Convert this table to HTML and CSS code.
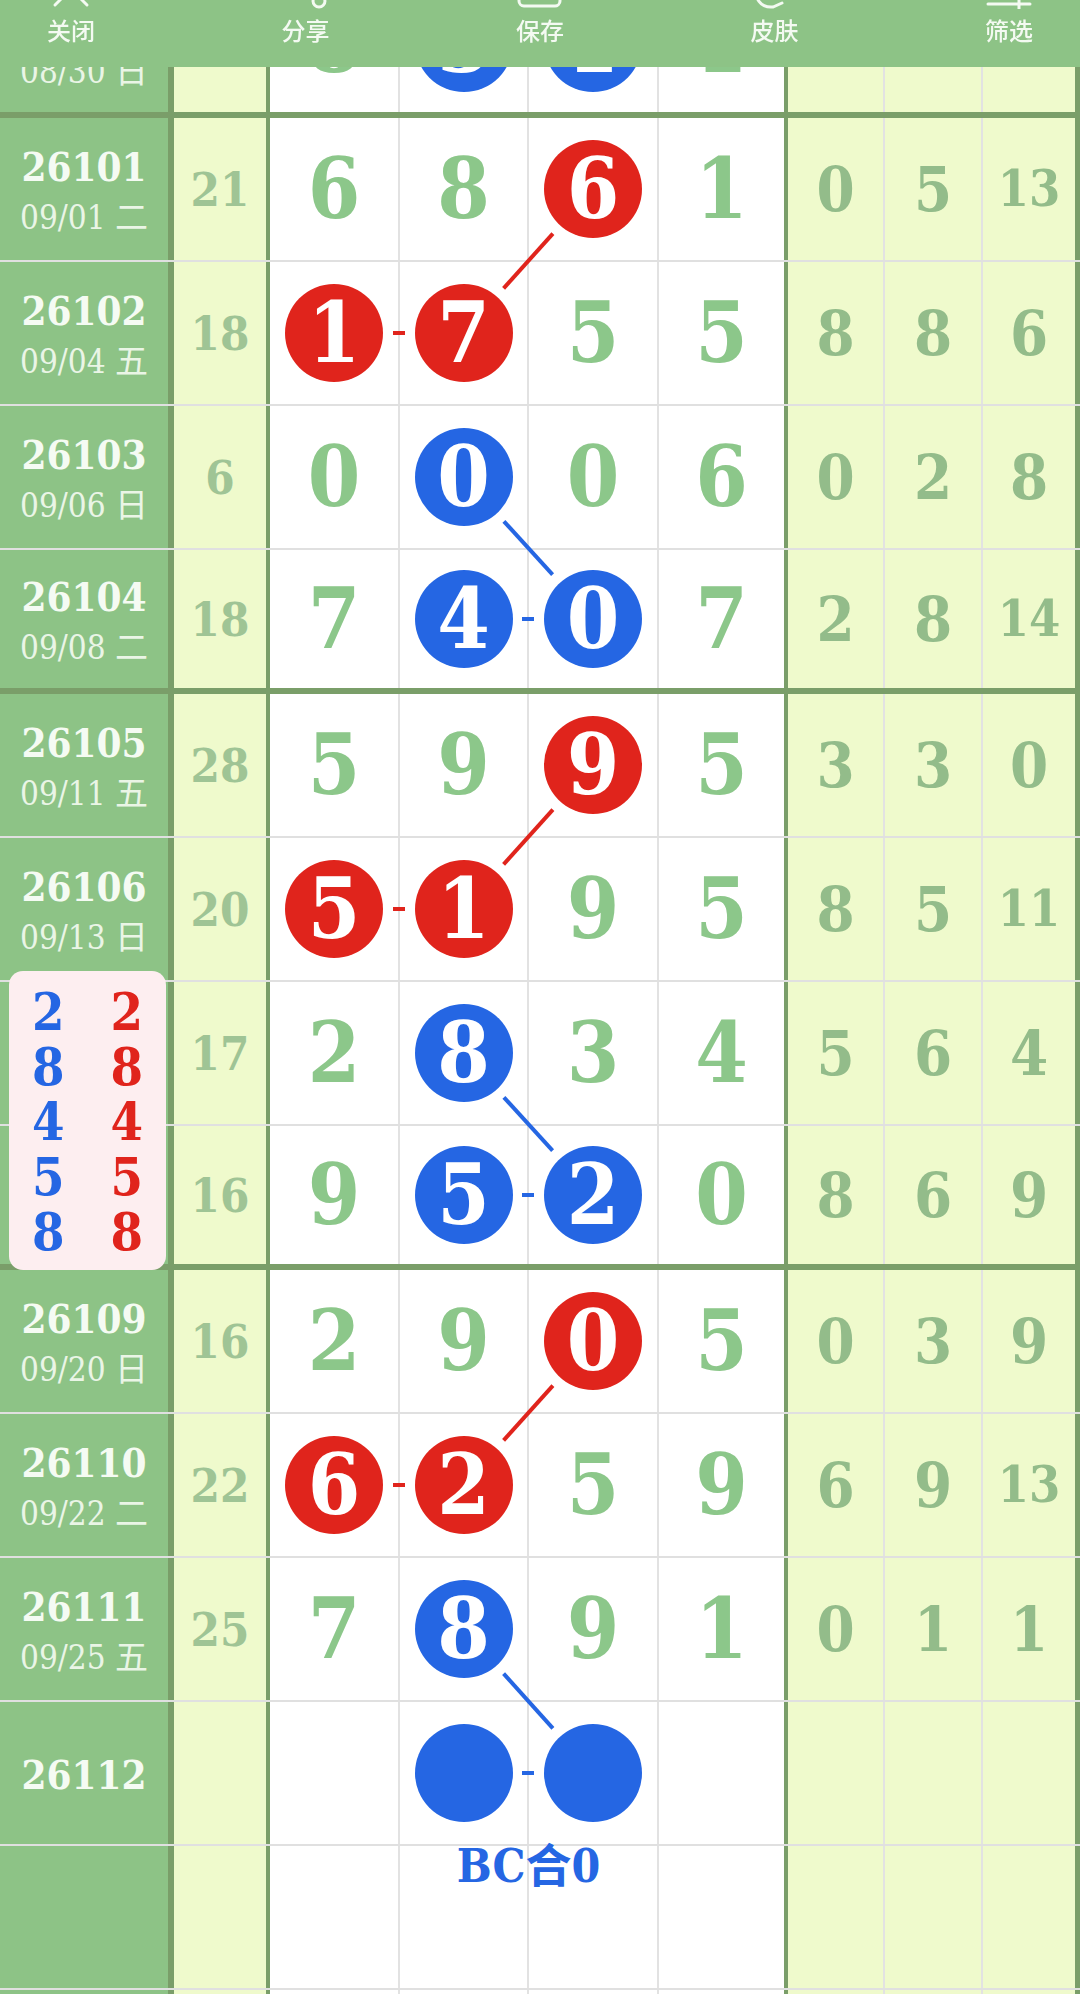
FILE: index.html
```html
<!DOCTYPE html>
<html lang="zh-CN">
<head>
  <meta charset="UTF-8" />
  <title>走势图</title>
  <meta name="viewport" content="width=device-width, initial-scale=1" />
  <link rel="stylesheet" href="styles.css">
</head>
<body>

  <div class="toolbar">
    <div class="tool">
      <svg viewBox="0 0 48 40"><path d="M8 4 L40 36 M40 4 L8 36" /></svg>
      <span>关闭</span>
    </div>
    <div class="tool">
      <svg viewBox="0 0 48 40"><circle cx="37" cy="32" r="6" /><path d="M12 20 L32 29" /></svg>
      <span>分享</span>
    </div>
    <div class="tool">
      <svg viewBox="0 0 48 40"><rect x="3" y="6" width="41" height="31" rx="5" /></svg>
      <span>保存</span>
    </div>
    <div class="tool">
      <svg viewBox="0 0 48 40"><path d="M6 14 C2 30 10 39 22 38 L31 34" /></svg>
      <span>皮肤</span>
    </div>
    <div class="tool">
      <svg viewBox="0 0 48 40"><path d="M3 35 L45 35 M34 24 L34 40" /></svg>
      <span>筛选</span>
    </div>
  </div>

  <div class="sheet">
    <div class="row end">
      <div class="no"><b>26100</b><span>08/30 日</span></div>
      <div class="sum">14</div>
      <div class="d">8</div>
      <div class="d"><i class="ball blue">3</i></div>
      <div class="d"><i class="ball blue">1</i></div>
      <div class="d d4">1</div>
      <div class="r">3</div>
      <div class="r">7</div>
      <div class="r last two">10</div>
    </div>

    <div class="row">
      <div class="no"><b>26101</b><span>09/01 二</span></div>
      <div class="sum">21</div>
      <div class="d">6</div>
      <div class="d">8</div>
      <div class="d"><i class="ball red">6</i></div>
      <div class="d d4">1</div>
      <div class="r">0</div>
      <div class="r">5</div>
      <div class="r last two">13</div>
    </div>
    <div class="row">
      <div class="no"><b>26102</b><span>09/04 五</span></div>
      <div class="sum">18</div>
      <div class="d"><i class="ball red">1</i></div>
      <div class="d"><i class="ball red">7</i></div>
      <div class="d">5</div>
      <div class="d d4">5</div>
      <div class="r">8</div>
      <div class="r">8</div>
      <div class="r last">6</div>
    </div>
    <div class="row">
      <div class="no"><b>26103</b><span>09/06 日</span></div>
      <div class="sum">6</div>
      <div class="d">0</div>
      <div class="d"><i class="ball blue">0</i></div>
      <div class="d">0</div>
      <div class="d d4">6</div>
      <div class="r">0</div>
      <div class="r">2</div>
      <div class="r last">8</div>
    </div>
    <div class="row end">
      <div class="no"><b>26104</b><span>09/08 二</span></div>
      <div class="sum">18</div>
      <div class="d">7</div>
      <div class="d"><i class="ball blue">4</i></div>
      <div class="d"><i class="ball blue">0</i></div>
      <div class="d d4">7</div>
      <div class="r">2</div>
      <div class="r">8</div>
      <div class="r last two">14</div>
    </div>

    <div class="row">
      <div class="no"><b>26105</b><span>09/11 五</span></div>
      <div class="sum">28</div>
      <div class="d">5</div>
      <div class="d">9</div>
      <div class="d"><i class="ball red">9</i></div>
      <div class="d d4">5</div>
      <div class="r">3</div>
      <div class="r">3</div>
      <div class="r last">0</div>
    </div>
    <div class="row">
      <div class="no"><b>26106</b><span>09/13 日</span></div>
      <div class="sum">20</div>
      <div class="d"><i class="ball red">5</i></div>
      <div class="d"><i class="ball red">1</i></div>
      <div class="d">9</div>
      <div class="d d4">5</div>
      <div class="r">8</div>
      <div class="r">5</div>
      <div class="r last two">11</div>
    </div>
    <div class="row">
      <div class="no"><b>26107</b><span>09/15 二</span></div>
      <div class="sum">17</div>
      <div class="d">2</div>
      <div class="d"><i class="ball blue">8</i></div>
      <div class="d">3</div>
      <div class="d d4">4</div>
      <div class="r">5</div>
      <div class="r">6</div>
      <div class="r last">4</div>
    </div>
    <div class="row end">
      <div class="no"><b>26108</b><span>09/18 五</span></div>
      <div class="sum">16</div>
      <div class="d">9</div>
      <div class="d"><i class="ball blue">5</i></div>
      <div class="d"><i class="ball blue">2</i></div>
      <div class="d d4">0</div>
      <div class="r">8</div>
      <div class="r">6</div>
      <div class="r last">9</div>
    </div>

    <div class="row">
      <div class="no"><b>26109</b><span>09/20 日</span></div>
      <div class="sum">16</div>
      <div class="d">2</div>
      <div class="d">9</div>
      <div class="d"><i class="ball red">0</i></div>
      <div class="d d4">5</div>
      <div class="r">0</div>
      <div class="r">3</div>
      <div class="r last">9</div>
    </div>
    <div class="row">
      <div class="no"><b>26110</b><span>09/22 二</span></div>
      <div class="sum">22</div>
      <div class="d"><i class="ball red">6</i></div>
      <div class="d"><i class="ball red">2</i></div>
      <div class="d">5</div>
      <div class="d d4">9</div>
      <div class="r">6</div>
      <div class="r">9</div>
      <div class="r last two">13</div>
    </div>
    <div class="row">
      <div class="no"><b>26111</b><span>09/25 五</span></div>
      <div class="sum">25</div>
      <div class="d">7</div>
      <div class="d"><i class="ball blue">8</i></div>
      <div class="d">9</div>
      <div class="d d4">1</div>
      <div class="r">0</div>
      <div class="r">1</div>
      <div class="r last">1</div>
    </div>
    <div class="row">
      <div class="no"><b>26112</b></div>
      <div class="sum"></div>
      <div class="d"></div>
      <div class="d"><i class="ball blue"></i></div>
      <div class="d"><i class="ball blue"></i></div>
      <div class="d d4"></div>
      <div class="r"></div>
      <div class="r"></div>
      <div class="r last"></div>
    </div>
    <div class="row">
      <div class="no"></div>
      <div class="sum"></div>
      <div class="d"></div>
      <div class="d"></div>
      <div class="d"></div>
      <div class="d d4"></div>
      <div class="r"></div>
      <div class="r"></div>
      <div class="r last"></div>
      <div class="tag">BC合0</div>
    </div>
    <div class="row">
      <div class="no"></div>
      <div class="sum"></div>
      <div class="d"></div>
      <div class="d"></div>
      <div class="d"></div>
      <div class="d d4"></div>
      <div class="r"></div>
      <div class="r"></div>
      <div class="r last"></div>
    </div>
  </div>

  <!-- links between the paired balls -->
  <svg class="links" viewBox="0 0 1080 1994">
    <g class="red">
      <line x1="552.9" y1="233.6" x2="503.6" y2="288.4" />
      <line x1="552.9" y1="809.6" x2="503.6" y2="864.4" />
      <line x1="552.9" y1="1385.6" x2="503.6" y2="1440.4" />
      <rect x="393" y="331" width="12" height="4" />
      <rect x="393" y="907" width="12" height="4" />
      <rect x="393" y="1483" width="12" height="4" />
    </g>
    <g class="blue">
      <line x1="503.9" y1="521.3" x2="552.6" y2="574.7" />
      <line x1="503.9" y1="1097.3" x2="552.6" y2="1150.7" />
      <line x1="503.6" y1="1673.6" x2="552.9" y2="1728.4" />
      <rect x="522" y="617" width="12" height="4" />
      <rect x="522" y="1193" width="12" height="4" />
      <rect x="522" y="1771" width="12" height="4" />
    </g>
  </svg>

  <div class="pick">
    <div class="blue-col">
      <span>2</span><span>8</span><span>4</span><span>5</span><span>8</span>
    </div>
    <div class="red-col">
      <span>2</span><span>8</span><span>4</span><span>5</span><span>8</span>
    </div>
  </div>

</body>
</html>
```

FILE: styles.css
```css
html, body {
  margin: 0;
  background: #fff;
  font-family: 'DejaVu Serif', 'Noto Sans CJK SC', serif;
  font-stretch: condensed;
}
body {
  position: relative;
  width: 1080px;
  height: 1994px;
  overflow: hidden;
}
.toolbar {
  position: fixed;
  top: 0;
  left: 0;
  right: 0;
  height: 67px;
  background: #8dc386;
  display: flex;
  justify-content: space-between;
  padding: 0 47px;
  box-sizing: border-box;
  z-index: 3;
}
.tool {
  width: 48px;
  display: flex;
  flex-direction: column;
  align-items: center;
}
.tool svg {
  width: 48px;
  height: 40px;
  margin-top: -31px;
  fill: none;
  stroke: #f4faf2;
  stroke-width: 3;
  stroke-linecap: round;
}
.tool span {
  font-family: 'Noto Sans CJK SC', sans-serif;
  font-stretch: normal;
  font-size: 24px;
  font-weight: 500;
  line-height: 26px;
  color: #f4faf2;
  margin-top: 8px;
  white-space: nowrap;
}
.sheet {
  margin-top: -26px;
}
.row {
  position: relative;
  display: grid;
  grid-template-columns: 174px 96px 130px 129px 130px 129px 97px 98px 97px;
  height: 144px;
  box-sizing: border-box;
  border-bottom: 2px solid #e0e0e0;
}
.row.end {
  border-bottom: 6px solid #7a9e69;
}
.row > div {
  display: flex;
  align-items: center;
  justify-content: center;
  box-sizing: border-box;
  border-right: 2px solid #e2e2e2;
  font-weight: bold;
  line-height: 1;
}
.row .no {
  background: #8dc386;
  border-right: 6px solid #7a9e69;
  flex-direction: column;
  padding-top: 4px;
}
.no b {
  font-size: 40px;
  line-height: 50px;
  color: #f5fbf3;
}
.no span {
  font-size: 33px;
  line-height: 44px;
  font-weight: normal;
  color: #eaf5e6;
  margin-top: 4px;
  white-space: nowrap;
}
.row .sum {
  background: #effacc;
  border-right: 4px solid #7a9e69;
  color: #9fc495;
  font-size: 47px;
}
.row .d {
  color: #8cc78a;
  font-size: 84px;
}
.row .d4 {
  border-right: 4px solid #7a9e69;
}
.row .r {
  background: #effacc;
  color: #93bc8a;
  font-size: 61px;
}
.row .r.two {
  font-size: 50px;
}
.row .r.last {
  border-right: 5px solid #7a9e69;
}
.ball {
  width: 98px;
  height: 98px;
  border-radius: 50%;
  display: flex;
  align-items: center;
  justify-content: center;
  color: #fff;
  font-style: normal;
}
.ball.red {
  background: #e0241c;
}
.ball.blue {
  background: #2566e3;
}
.row .tag {
  position: absolute;
  left: 400px;
  top: -4px;
  width: 257px;
  border: none;
  font-size: 46px;
  line-height: 48px;
  color: #2566e3;
}
.links {
  position: absolute;
  top: 0;
  left: 0;
  width: 1080px;
  height: 1994px;
  z-index: 1;
  pointer-events: none;
}
.links line {
  stroke-width: 4;
}
.links .red line {
  stroke: #e0241c;
}
.links .red rect {
  fill: #e0241c;
}
.links .blue line {
  stroke: #2566e3;
}
.links .blue rect {
  fill: #2566e3;
}
.pick {
  position: absolute;
  left: 9px;
  top: 971px;
  width: 157px;
  height: 299px;
  padding-top: 13px;
  box-sizing: border-box;
  background: #fdeef0;
  border-radius: 14px;
  display: flex;
  z-index: 2;
}
.pick div {
  flex: 1;
  display: flex;
  flex-direction: column;
  align-items: center;
  font-size: 52px;
  line-height: 55px;
  font-weight: bold;
}
.pick .blue-col {
  color: #2566e3;
}
.pick .red-col {
  color: #e0241c;
}
```
